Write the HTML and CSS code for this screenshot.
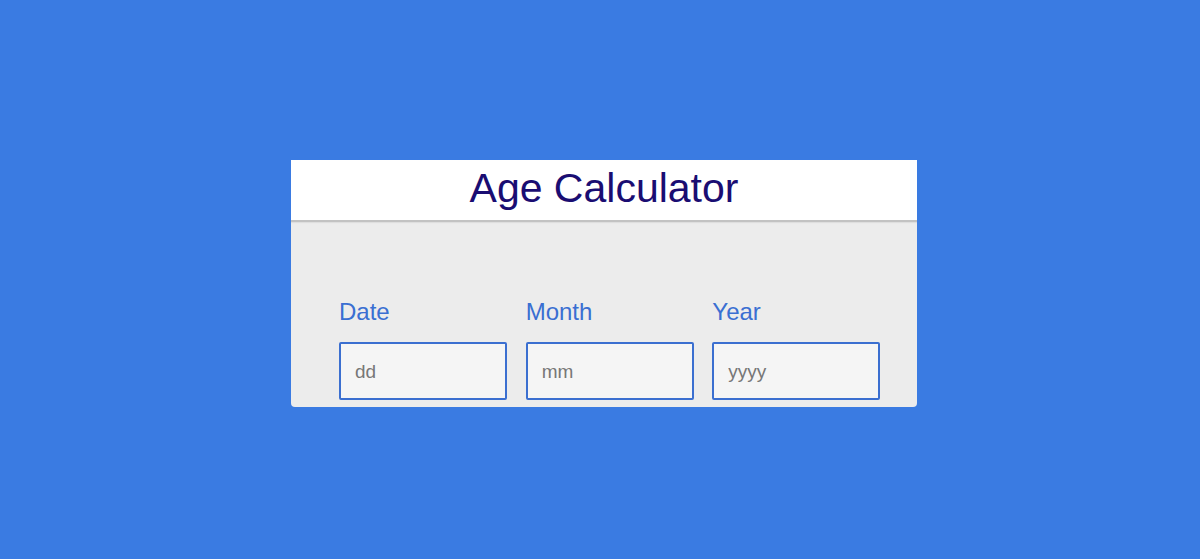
FILE: index.html
```html
<!DOCTYPE html>
<html lang="en">
<head>
<meta charset="utf-8">
<title>Age Calculator</title>
<link rel="stylesheet" href="styles.css">
</head>
<body>
<div class="page">
  <div class="card">
    <div class="card-header">
      <h1 class="title">Age Calculator</h1>
    </div>
    <div class="card-body">
      <div class="fields">
        <div class="field">
          <label class="label" for="d">Date</label>
          <input class="input" id="d" type="text" placeholder="dd">
        </div>
        <div class="field">
          <label class="label" for="m">Month</label>
          <input class="input" id="m" type="text" placeholder="mm">
        </div>
        <div class="field">
          <label class="label" for="y">Year</label>
          <input class="input" id="y" type="text" placeholder="yyyy">
        </div>
      </div>
    </div>
  </div>
</div>
</body>
</html>
```

FILE: styles.css
```css
html, body {
  margin: 0;
  padding: 0;
}
body {
  background: #3a7be2;
  font-family: "Liberation Sans", Arial, sans-serif;
}
.page {
  box-sizing: border-box;
  min-height: 100vh;
  padding: 8px 0 0 8px;
  display: flex;
  align-items: center;
  justify-content: center;
}
.card {
  width: 626px;
  height: 247px;
  background: #ececec;
  border-radius: 0 0 4px 4px;
  overflow: hidden;
}
.card-header {
  background: #ffffff;
  height: 60px;
  border-bottom: 2px solid #c2c2c2;
  box-shadow: 0 1px 1px rgba(0,0,0,0.06);
  box-sizing: content-box;
  display: flex;
  justify-content: center;
}
.title {
  margin: 5px 0 0 0;
  font-size: 41px;
  font-weight: normal;
  line-height: 47px;
  color: #1a0d72;
}
.card-body {
  padding: 76px 18px 0 48px;
}
.fields {
  display: grid;
  grid-template-columns: repeat(3, 1fr);
}
.field {
  display: flex;
  flex-direction: column;
}
.label {
  font-size: 24px;
  line-height: 27px;
  color: #3a6fd2;
  margin-bottom: 17px;
}
.input {
  box-sizing: border-box;
  width: 168px;
  height: 58px;
  border: 2px solid #3b6fd0;
  border-radius: 2px;
  background: #f5f5f5;
  padding: 1px 14px 0 14px;
  font-family: "Liberation Sans", Arial, sans-serif;
  font-size: 19px;
  color: #333;
  outline: none;
}
.input::placeholder {
  color: #777777;
}
```
